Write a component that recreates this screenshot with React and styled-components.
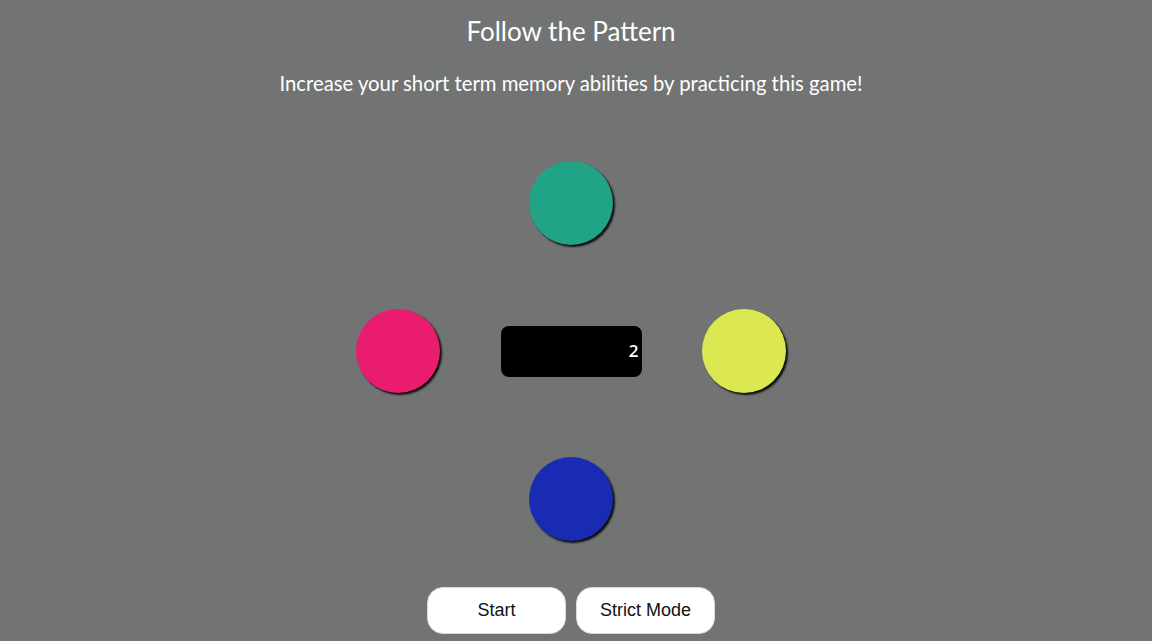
import styled, { createGlobalStyle } from 'styled-components'

const GlobalStyle = createGlobalStyle`
  html, body {
    margin: 0;
    padding: 0;
    background: #717472;
    font-family: Lato, "Open Sans", sans-serif;
  }
`;

const pads = [
  { id: 'green', color: '#21a386', col: 2, row: 1 },
  { id: 'pink', color: '#e91c6f', col: 1, row: 2 },
  { id: 'yellow', color: '#dbe851', col: 3, row: 2 },
  { id: 'blue', color: '#1a2bb3', col: 2, row: 3 },
];

const App = () => {
  return (
    <>
      <GlobalStyle />
      <Page>
        <Title>Follow the Pattern</Title>
        <Subtitle>Increase your short term memory abilities by practicing this game!</Subtitle>
        <Board>
          {pads.map((pad) => (
            <Pad key={pad.id} $color={pad.color} $col={pad.col} $row={pad.row} />
          ))}
          <Counter>2</Counter>
        </Board>
        <Controls>
          <Button>Start</Button>
          <Button>Strict Mode</Button>
        </Controls>
      </Page>
    </>
  );
};

export default App

const Page = styled.main`
  display: flex;
  flex-direction: column;
  align-items: center;
  padding: 0 10px 0 0;
  height: 641px;
  box-sizing: border-box;
  color: #fff;
  overflow: hidden;
`;

const Title = styled.h1`
  font-size: 26px;
  font-weight: 400;
  margin: 16px 0 0;
  line-height: 30px;
`;

const Subtitle = styled.p`
  font-size: 20.3px;
  font-weight: 400;
  margin: 25px 0 0;
  line-height: 24px;
`;

const Board = styled.section`
  display: grid;
  grid-template-columns: repeat(3, 173px);
  grid-template-rows: repeat(3, 148px);
  place-items: center;
  margin-top: 34px;
`;

const Pad = styled.button`
  grid-column: ${(p) => p.$col};
  grid-row: ${(p) => p.$row};
  width: 84px;
  height: 84px;
  border: none;
  border-radius: 50%;
  padding: 0;
  background: ${(p) => p.$color};
  box-shadow: 2px 2px 2px rgba(0, 0, 0, 0.9);
  cursor: pointer;
`;

const Counter = styled.div`
  grid-column: 2;
  grid-row: 2;
  width: 141px;
  height: 51px;
  box-sizing: border-box;
  background: #000;
  border-radius: 8px;
  display: flex;
  align-items: center;
  justify-content: flex-end;
  padding: 0 3px 2px 0;
  font-family: "Open Sans", sans-serif;
  font-weight: 600;
  font-size: 17px;
  color: #fff;
`;

const Controls = styled.div`
  display: flex;
  gap: 10px;
  margin-top: 14px;
`;

const Button = styled.button`
  width: 139px;
  height: 47px;
  background: #fff;
  border: 1px solid #d9d9d9;
  border-radius: 16px;
  font-family: "Liberation Sans", Arial, sans-serif;
  font-size: 18px;
  color: #111;
  cursor: pointer;
`;
